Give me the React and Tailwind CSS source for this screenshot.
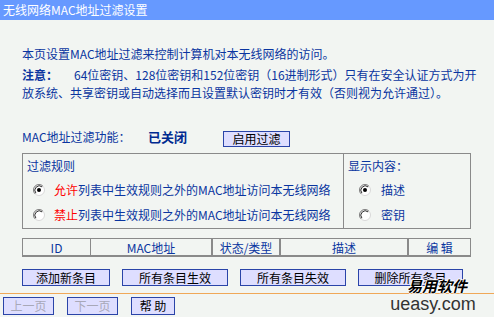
import React from 'react';

const Radio = ({ checked }) => (
  <svg width="12" height="12" viewBox="0 0 12 12" className="shrink-0">
    <circle cx="6" cy="6" r="5.5" fill="#fff" stroke="#d8d8d8" strokeWidth="1" />
    <path d="M2.1 9.9 A5.5 5.5 0 0 1 9.9 2.1" stroke="#808080" strokeWidth="1" fill="none" />
    <path d="M2.9 9.1 A4.4 4.4 0 0 1 9.1 2.9" stroke="#303030" strokeWidth="1" fill="none" />
    {checked && <circle cx="6" cy="6" r="2" fill="#000" />}
  </svg>
);

const Btn = ({ w, children, disabled }) => (
  <button
    className={`${w} h-full border border-[#2a44a8] bg-[#dedeff] text-[12px] leading-none ${disabled ? 'text-[#a8a8b8]' : 'text-black'}`}
  >
    {children}
  </button>
);

export default function App() {
  const blue = 'text-[#0a35a0]';
  return (
    <div className="relative w-[494px] h-[317px] overflow-hidden bg-[#f2f5f2] font-['Noto_Sans_CJK_SC',sans-serif] text-[12px]">
      <div className="h-[20px] bg-[#6699ff] pl-[3px] leading-[20px] text-white">无线网络MAC地址过滤设置</div>

      <div className={`ml-[22px] w-[449px] ${blue}`}>
        <p className="mt-[25px] leading-[18px] whitespace-nowrap">本页设置MAC地址过滤来控制计算机对本无线网络的访问。</p>
        <div className="mt-[3px] leading-[18px] whitespace-nowrap">
          <div>
            <span className="font-bold">注意：</span>
            <span className="ml-[16px]">64位密钥、128位密钥和152位密钥（16进制形式）只有在安全认证方式为开</span>
          </div>
          <div>放系统、共享密钥或自动选择而且设置默认密钥时才有效（否则视为允许通过）。</div>
        </div>

        <div className="mt-[29px] flex h-[16px] items-center">
          <span className="mb-[4px] w-[126px]">MAC地址过滤功能：</span>
          <span className="mb-[4px] w-[75px] text-[13px] font-bold text-[#002a90]">已关闭</span>
          <Btn w="w-[67px]">启用过滤</Btn>
        </div>

        <div className="mt-[6px] flex h-[76px] border border-[#8a8a8a]">
          <div className="w-[321px] border-r border-[#8a8a8a] pt-[3px]">
            <div className="pl-[4px] leading-[18px]">过滤规则</div>
            <div className="mt-[6px] flex h-[18px] items-center gap-[9px] pl-[10px]">
              <Radio checked />
              <span><span className="text-[#ff0000]">允许</span>列表中生效规则之外的MAC地址访问本无线网络</span>
            </div>
            <div className="mt-[7px] flex h-[18px] items-center gap-[9px] pl-[10px]">
              <Radio />
              <span><span className="text-[#ff0000]">禁止</span>列表中生效规则之外的MAC地址访问本无线网络</span>
            </div>
          </div>
          <div className="flex-1 pt-[3px]">
            <div className="pl-[4px] leading-[18px]">显示内容：</div>
            <div className="mt-[6px] flex h-[18px] items-center gap-[10px] pl-[15px]">
              <Radio checked />
              <span>描述</span>
            </div>
            <div className="mt-[7px] flex h-[18px] items-center gap-[10px] pl-[15px]">
              <Radio />
              <span>密钥</span>
            </div>
          </div>
        </div>

        <div className="mt-[9px] flex h-[19px] border-t border-b-2 border-[#8a8a8a] text-center leading-[17px]">
          <div className="w-[69px] border-x border-[#8a8a8a]">ID</div>
          <div className="w-[122px] border-r-2 border-[#8a8a8a]">MAC地址</div>
          <div className="w-[68px] border-r-2 border-[#8a8a8a]">状态/类型</div>
          <div className="w-[128px] border-r-2 border-[#8a8a8a]">描述</div>
          <div className="flex-1 border-r border-[#8a8a8a]">编 辑</div>
        </div>

        <div className="mt-[12px] flex h-[17px] gap-[12px]">
          <Btn w="w-[88px]">添加新条目</Btn>
          <Btn w="w-[106px]">所有条目生效</Btn>
          <Btn w="w-[106px]">所有条目失效</Btn>
          <Btn w="w-[105px]">删除所有条目</Btn>
        </div>
      </div>

      <div className="mt-[7px] h-px bg-[#f0a858]" />

      <div className="mt-[3px] ml-[3px] flex h-[18px] gap-[13px]">
        <Btn w="w-[51px]" disabled>上一页</Btn>
        <Btn w="w-[51px]" disabled>下一页</Btn>
        <Btn w="w-[44px]">帮 助</Btn>
      </div>

      <div className="absolute left-[388px] top-[278px] flex w-[90px] flex-col items-center">
        <span className="ml-[8px] text-[15px] font-bold italic leading-[16px] text-black [text-shadow:1px_0_0_#fff,-1px_0_0_#fff,0_1px_0_#fff,0_-1px_0_#fff]">易用软件</span>
        <span className="mt-[1px] font-['Liberation_Sans',sans-serif] text-[18px] leading-[19px] text-[#333]">ueasy.com</span>
      </div>
    </div>
  );
}
